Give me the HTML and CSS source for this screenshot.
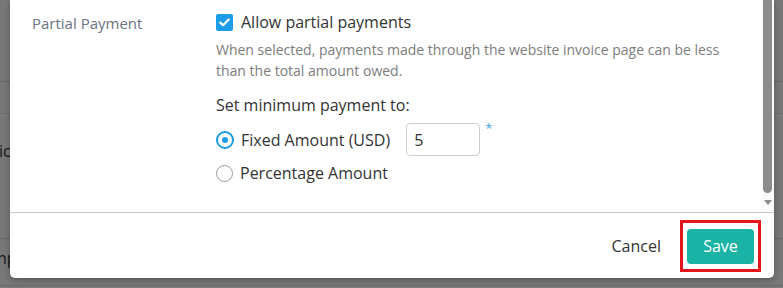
FILE: index.html
```html
<!DOCTYPE html>
<html lang="en">
<head>
    <meta charset="UTF-8">
    <title>Invoice Settings</title>
    <link rel="stylesheet" href="styles.css">
</head>
<body>
    <div class="page">
        <div class="page-row r1"></div>
        <div class="page-row r2"><span class="page-text">ic</span></div>
        <div class="page-row r3"><span class="page-text">np</span></div>
    </div>
    <div class="backdrop"></div>

    <div class="modal">
        <div class="modal-main">
            <div class="modal-body">
                <div class="setting-row">
                    <div class="setting-label">Partial Payment</div>
                    <div class="setting-field">
                        <label class="check-row">
                            <span class="checkbox">
                                <svg width="11" height="9" viewBox="0 0 11 9"><path d="M1.3 4.6 L4.1 7.2 L9.7 1.5" fill="none" stroke="#fff" stroke-width="2.2" stroke-linecap="round" stroke-linejoin="round"/></svg>
                            </span>
                            Allow partial payments
                        </label>
                        <p class="help">When selected, payments made through the website invoice page can be less than the total amount owed.</p>
                        <div class="min-title">Set minimum payment to:</div>
                        <div class="radio-row">
                            <span class="radio checked"></span>
                            <span class="radio-text">Fixed Amount (USD)</span>
                            <input class="amount" type="text" value="5">
                            <span class="required">*</span>
                        </div>
                        <div class="radio-row second">
                            <span class="radio"></span>
                            <span class="radio-text">Percentage Amount</span>
                        </div>
                    </div>
                </div>
            </div>
            <div class="scrollbar">
                <div class="thumb"></div>
                <div class="arrow"></div>
            </div>
        </div>
        <div class="modal-footer">
            <button class="cancel">Cancel</button>
            <span class="highlight">
                <button class="save">Save</button>
            </span>
        </div>
    </div>
</body>
</html>
```

FILE: styles.css
```css
body {
    margin: 0;
    font-family: "Open Sans", Arial, sans-serif;
    color: #333;
    width: 783px;
    height: 288px;
    overflow: hidden;
    position: relative;
}
.page {
    background: #fff;
    height: 288px;
}
.page-row {
    border-bottom: 1px solid #ddd;
}
.page-row.r1 {
    height: 81px;
}
.page-row.r2 {
    height: 124px;
    border-top: 1px solid #e4e4e4;
    margin-top: 31px;
}
.page-row.r3 {
    height: 38px;
}
.page-text {
    display: block;
    font-size: 16px;
    margin-left: -1px;
}
.r2 .page-text {
    margin-top: 26px;
}
.r3 .page-text {
    margin-top: 8px;
    margin-left: -3px;
}
.backdrop {
    position: absolute;
    left: 0;
    top: 0;
    right: 0;
    bottom: 0;
    background: rgba(0, 0, 0, 0.53);
}
.modal {
    position: absolute;
    left: 10px;
    top: 0;
    width: 764px;
    height: 278px;
    background: #fff;
    border-radius: 0 0 5px 5px;
    box-shadow: 0 2px 6px rgba(0, 0, 0, 0.3);
    display: flex;
    flex-direction: column;
}
.modal-main {
    display: flex;
    height: 212px;
    border-bottom: 1px solid #c8c8c8;
}
.modal-body {
    flex: 1;
    padding: 11px 0 0 22px;
}
.setting-row {
    display: flex;
}
.setting-label {
    width: 184px;
    font-size: 15px;
    line-height: 22px;
    padding-top: 1px;
    color: #6b7480;
}
.setting-field {
    flex: 1;
}
.check-row {
    display: flex;
    align-items: center;
    gap: 8px;
    font-size: 16px;
    line-height: 22px;
}
.checkbox {
    width: 17px;
    height: 17px;
    border-radius: 2px;
    background: #1b9ce6;
    display: flex;
    align-items: center;
    justify-content: center;
}
.help {
    margin: 6px 0 0;
    font-size: 14px;
    line-height: 21px;
    color: #7d7d7d;
    width: 520px;
}
.min-title {
    margin-top: 13px;
    font-size: 16px;
    line-height: 22px;
}
.radio-row {
    display: flex;
    align-items: center;
    margin-top: 7px;
    font-size: 16px;
    height: 33px;
}
.radio-row.second {
    margin-top: 6px;
    height: 22px;
}
.radio {
    width: 15px;
    height: 15px;
    border: 1.5px solid #9a9a9a;
    border-radius: 50%;
    box-sizing: content-box;
    margin-right: 7px;
    position: relative;
}
.radio.checked {
    border: 2px solid #1b9ce6;
    width: 14px;
    height: 14px;
}
.radio.checked::after {
    content: "";
    position: absolute;
    left: 4px;
    top: 4px;
    width: 6px;
    height: 6px;
    border-radius: 50%;
    background: #1b9ce6;
}
.amount {
    margin-left: 16px;
    width: 74px;
    height: 33px;
    box-sizing: border-box;
    border: 1px solid #cfcfcf;
    border-radius: 4px;
    padding: 0 7px;
    font-family: inherit;
    font-size: 16px;
    color: #333;
}
.required {
    align-self: flex-start;
    margin: -3px 0 0 5px;
    font-size: 13px;
    line-height: 16px;
    color: #45a6e2;
}
.scrollbar {
    width: 13px;
    background: #fafafa;
    display: flex;
    flex-direction: column;
    align-items: center;
}
.thumb {
    width: 9px;
    height: 193px;
    background: #8c8c8c;
    border-radius: 0 0 5px 5px;
}
.arrow {
    margin-top: 7px;
    width: 0;
    height: 0;
    border-left: 4px solid transparent;
    border-right: 4px solid transparent;
    border-top: 5px solid #8c8c8c;
}
.modal-footer {
    flex: 1;
    display: flex;
    justify-content: flex-end;
    align-items: center;
    padding-right: 13px;
    gap: 19px;
}
button {
    font-family: inherit;
    font-size: 16px;
    border: none;
    cursor: pointer;
}
.cancel {
    background: none;
    color: #333;
    padding: 0;
}
.highlight {
    display: flex;
    border: 3px solid #e3151d;
    padding: 6px 4px 5px;
}
.save {
    width: 67px;
    height: 35px;
    border-radius: 4px;
    background: #1bb3a6;
    color: #fff;
}
```
